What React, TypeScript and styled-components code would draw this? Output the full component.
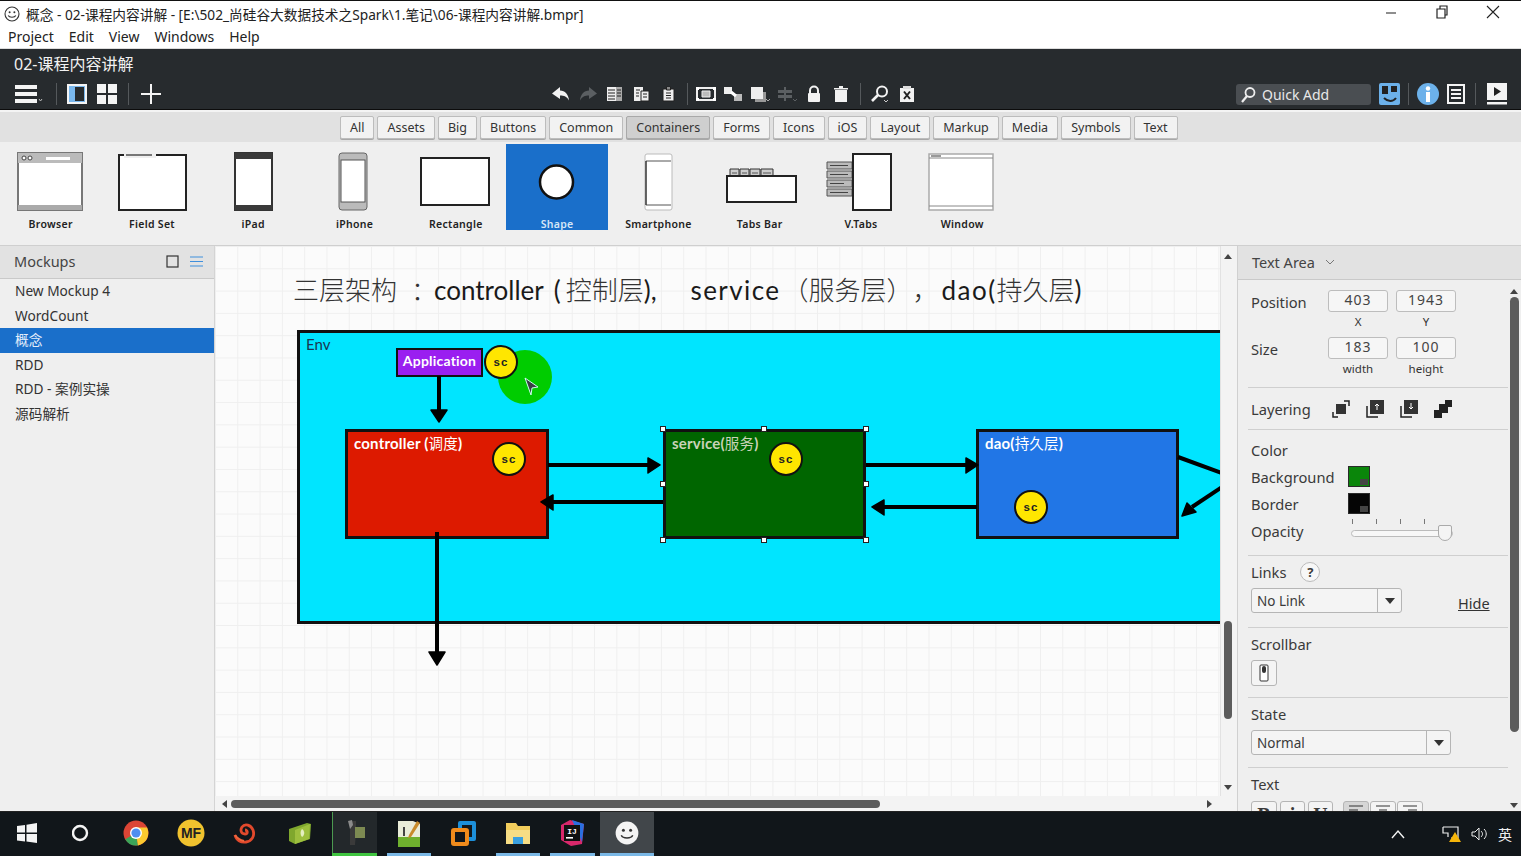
import styled, { createGlobalStyle } from 'styled-components';
import { ReactNode } from 'react';

const GlobalStyle = createGlobalStyle`
  html, body { margin: 0; padding: 0; background: #fff; }
  * { box-sizing: border-box; }
  body { font-family: "Noto Sans", "Noto Sans CJK SC", sans-serif; color: #333; }
`;

const Page = styled.div`
  width: 1521px;
  height: 856px;
  display: flex;
  flex-direction: column;
  overflow: hidden;
  background: #efefef;
`;

/* window chrome */
const TitleBar = styled.div`
  height: 26px;
  flex: none;
  display: flex;
  align-items: center;
  padding-left: 4px;
  gap: 6px;
  background: #fff;
  border-top: 1px solid #111;
  font-size: 13.7px;
  color: #222;
  white-space: nowrap;
`;

const WindowButtons = styled.div`
  margin-left: auto;
  display: flex;
  align-items: center;
  gap: 37px;
  padding-right: 21px;
  margin-top: -3px;
`;

const MenuBar = styled.div`
  height: 23px;
  flex: none;
  display: flex;
  align-items: center;
  gap: 15px;
  padding: 0 0 1px 8px;
  background: #fff;
  border-bottom: 1px solid #ddd;
  font-size: 14px;
  color: #222;
`;

const DarkBar = styled.div`
  height: 61px;
  flex: none;
  background: #272b2e;
  color: #fff;
  border-bottom: 1px solid #0c0c0c;
`;

const DocTitle = styled.div`
  height: 30px;
  padding: 5px 0 0 14px;
  font-size: 16px;
  line-height: 20px;
  color: #f2f2f2;
`;

const ToolRow = styled.div`
  height: 30px;
  display: flex;
  align-items: center;
  position: relative;
`;

const ToolGroup = styled.div<{ $start: number; $gap?: number }>`
  display: flex;
  align-items: center;
  gap: ${(p) => p.$gap ?? 7}px;
  margin-left: ${(p) => p.$start}px;
`;

const ToolSep = styled.span<{ $mx?: number }>`
  width: 1px;
  height: 22px;
  background: #55595c;
  margin: 0 ${(p) => p.$mx ?? 0}px;
`;

const ToolSpacer = styled.span`
  width: 10px;
`;

const QuickAdd = styled.div`
  width: 135px;
  height: 21px;
  border-radius: 3px;
  background: #4a4e52;
  display: flex;
  align-items: center;
  gap: 5px;
  padding-left: 4px;
  font-size: 14px;
  color: #e8e8e8;
`;

const FilterBar = styled.div`
  height: 32px;
  flex: none;
  display: flex;
  justify-content: flex-start;
  align-items: center;
  gap: 3px;
  padding-left: 340px;
  background: #e1e1e1;
  border-top: 2px solid #f4f4f4;
`;

const FilterButton = styled.div<{ $active?: boolean }>`
  height: 23px;
  padding: 0 9px;
  display: flex;
  align-items: center;
  font-size: 12.5px;
  color: #333;
  border-radius: 2px;
  border: 1px solid ${(p) => (p.$active ? '#a9a9a9' : '#bcbcbc')};
  background: ${(p) => (p.$active ? '#cfcfcf' : '#f2f2f2')};
  box-shadow: 0 1px 0 #a8a8a8;
`;

const Library = styled.div`
  height: 104px;
  flex: none;
  display: flex;
  background: #efefef;
  border-bottom: 1px solid #cfcfcf;
  padding-top: 2px;
`;

const LibraryItem = styled.div<{ $selected?: boolean }>`
  width: 101.3px;
  height: 86px;
  display: flex;
  flex-direction: column;
  align-items: center;
  background: ${(p) => (p.$selected ? '#1a6fca' : 'transparent')};
  font-size: 10.5px;
  font-weight: 600;
  letter-spacing: 0.3px;
  color: ${(p) => (p.$selected ? '#d5e6f7' : '#222')};
`;

const Thumb = styled.svg`
  width: 100px;
  height: 72px;
  margin-top: 1px;
  flex: none;
`;

/* main three columns */
const Main = styled.div`
  flex: 1;
  min-height: 0;
  display: flex;
`;

const Sidebar = styled.aside`
  width: 215px;
  flex: none;
  background: #efefef;
  border-right: 1px solid #d4d4d4;
`;

const PanelHeader = styled.div`
  height: 34px;
  display: flex;
  align-items: center;
  background: #e2e2e2;
  border-bottom: 1px solid #c9c9c9;
  font-size: 14.5px;
  color: #444;
`;

const SidebarHeader = styled(PanelHeader)`
  height: 33px;
  padding: 0 11px 2px 14px;
  gap: 11px;
  & > span { margin-right: auto; }
`;

const MockupList = styled.ul`
  list-style: none;
  margin: 0;
  padding: 0;
`;

const MockupRow = styled.li<{ $selected?: boolean }>`
  height: 24.6px;
  line-height: 24.6px;
  padding-left: 15px;
  font-size: 13.7px;
  color: ${(p) => (p.$selected ? '#e4eefa' : '#333')};
  background: ${(p) => (p.$selected ? '#1a6fca' : 'transparent')};
`;

const CanvasArea = styled.div`
  flex: 1;
  min-width: 0;
  display: grid;
  grid-template-columns: 1fr 17px;
  grid-template-rows: 1fr 15px;
`;

const Canvas = styled.div`
  position: relative;
  overflow: hidden;
  background-color: #fbfbfb;
  background-image: linear-gradient(#efefef 1px, transparent 1px), linear-gradient(90deg, #efefef 1px, transparent 1px);
  background-size: 22.3px 22.3px;
`;

const Heading = styled.div`
  position: absolute;
  left: 78px;
  top: 25px;
  font-family: "Lato", "Noto Sans CJK SC", sans-serif;
  font-size: 26px;
  line-height: 36px;
  color: #1a1a1a;
  white-space: pre;
`;

const HeadWord = styled.span<{ $ml?: number; $ls?: number }>`
  margin-left: ${(p) => p.$ml ?? 0}px;
  letter-spacing: ${(p) => p.$ls ?? 0}px;
`;

const HeadCjk = styled.span<{ $ml?: number }>`
  margin-left: ${(p) => p.$ml ?? 0}px;
  font-family: "Noto Sans CJK SC", sans-serif;
  font-weight: 300;
  font-size: 26px;
  color: #333;
  text-spacing-trim: space-all;
`;

const HalfColon = styled(HeadCjk)`
  font-feature-settings: "halt";
`;

const Env = styled.div`
  position: absolute;
  left: 82px;
  top: 84px;
  width: 1100px;
  height: 294px;
  background: #00e5ff;
  border: 3px solid #111;
  padding: 2px 6px;
  font-family: "Lato", sans-serif;
  font-size: 15px;
  color: #1a3550;
`;

const DiagramBox = styled.div<{ $x: number; $y: number; $w: number; $h: number; $bg: string; $muted?: boolean }>`
  position: absolute;
  left: ${(p) => p.$x - 215}px;
  top: ${(p) => p.$y - 246}px;
  width: ${(p) => p.$w}px;
  height: ${(p) => p.$h}px;
  background: ${(p) => p.$bg};
  border: 3px solid #111;
  padding: 0 6px;
  font-family: "Lato", "Noto Sans CJK SC", sans-serif;
  font-size: 15px;
  line-height: 21px;
  font-weight: 700;
  letter-spacing: 0.2px;
  color: ${(p) => (p.$muted ? '#c9d3b8' : '#fff')};
  white-space: nowrap;
`;

const BoxCjk = styled.span`
  font-family: "Noto Sans CJK SC", sans-serif;
  font-weight: 400;
  font-size: 14.5px;
`;

const AppBox = styled(DiagramBox)`
  text-align: center;
  border-width: 2px;
  padding: 0;
  font-size: 14px;
  line-height: 22px;
`;

const Spark = styled.div<{ $cx: number; $cy: number }>`
  position: absolute;
  left: ${(p) => p.$cx - 215 - 17}px;
  top: ${(p) => p.$cy - 246 - 17}px;
  width: 34px;
  height: 34px;
  border-radius: 50%;
  border: 2.5px solid #111;
  background: #ffe600;
  display: flex;
  align-items: center;
  justify-content: center;
  font-family: "Liberation Sans", sans-serif;
  font-size: 11.5px;
  font-weight: 700;
  letter-spacing: 1px;
  color: #222;
`;

const CursorHalo = styled.div`
  position: absolute;
  left: 283px;
  top: 104px;
  width: 54px;
  height: 54px;
  border-radius: 50%;
  background: #00cc00;
`;

const Overlay = styled.svg`
  position: absolute;
  left: 0;
  top: 0;
  width: 1005px;
  height: 550px;
`;

const Handle = styled.span<{ $cx: number; $cy: number }>`
  position: absolute;
  left: ${(p) => p.$cx - 215 - 3}px;
  top: ${(p) => p.$cy - 246 - 3}px;
  width: 6px;
  height: 6px;
  background: #fff;
  border: 1px solid #222;
`;

const VScroll = styled.div`
  background: #f3f3f3;
  border-left: 1px solid #e2e2e2;
  display: flex;
  flex-direction: column;
  align-items: center;
  padding: 8px 2px 6px 0;
  grid-row: 1;
  grid-column: 2;
`;

const VThumb = styled.div`
  width: 8px;
  height: 98px;
  margin-top: auto;
  margin-bottom: 66px;
  border-radius: 4px;
  background: #5c5c5c;
`;

const HScroll = styled.div`
  grid-column: 1 / 3;
  grid-row: 2;
  background: #f3f3f3;
  display: flex;
  align-items: center;
  padding: 0 25px 0 7px;
`;

const HThumb = styled.div`
  width: 649px;
  height: 8px;
  margin-left: 4px;
  border-radius: 4px;
  background: #5c5c5c;
`;

const ScrollArrow = styled.span<{ $dir: 'up' | 'down' | 'left' | 'right' }>`
  width: 0;
  height: 0;
  border: 4px solid transparent;
  ${(p) => (p.$dir === 'up' ? 'border-bottom: 5px solid #444; border-top-width: 0;' : '')}
  ${(p) => (p.$dir === 'down' ? 'border-top: 5px solid #444; border-bottom-width: 0;' : '')}
  ${(p) => (p.$dir === 'left' ? 'border-right: 5px solid #444; border-left-width: 0;' : '')}
  ${(p) => (p.$dir === 'right' ? 'border-left: 5px solid #444; border-right-width: 0; margin-left: auto;' : '')}
`;

/* properties panel */
const Inspector = styled.aside`
  width: 284px;
  flex: none;
  display: flex;
  flex-direction: column;
  position: relative;
  background: #efefef;
  border-left: 1px solid #d0d0d0;
`;

const InspectorHeader = styled(PanelHeader)`
  padding: 0 0 1px 14px;
  gap: 10px;
`;

const InspectorBody = styled.div`
  flex: 1;
  min-height: 0;
  overflow: hidden;
  padding: 0 13px 0 10px;
  font-size: 14.7px;
  color: #3a3a3a;
`;

const Section = styled.section<{ $h: number; $pad?: number }>`
  height: ${(p) => p.$h}px;
  padding: ${(p) => p.$pad ?? 7}px 0 0 3px;
  border-bottom: 1px solid #cfcfcf;
`;

const FieldRow = styled.div`
  display: grid;
  grid-template-columns: 69px 60px 60px;
  column-gap: 8px;
  height: 47px;
  align-items: start;
  line-height: 24px;
`;

const NumBox = styled.div`
  display: flex;
  flex-direction: column;
  align-items: center;
  font-size: 11.5px;
  color: #333;
  & > div {
    width: 60px;
    height: 22px;
    margin-bottom: 2px;
    border: 1px solid #bdbdbd;
    border-radius: 3px;
    background: #f6f6f6;
    text-align: center;
    font-size: 14px;
    line-height: 18px;
    letter-spacing: 1px;
    color: #444;
  }
  & > span { line-height: 16px; }
`;

const IconRow = styled.div`
  display: flex;
  align-items: center;
  height: 42px;
  gap: 16px;
  & > span { width: 64px; margin-right: 1px; }
`;

const ColorRow = styled.div`
  display: flex;
  align-items: center;
  height: 27px;
  & > span:first-child { width: 97px; }
`;

const Swatch = styled.div<{ $color: string }>`
  width: 22px;
  height: 21px;
  position: relative;
  background: ${(p) => p.$color};
  border: 1px solid #2a2a2a;
  &::after {
    content: '';
    position: absolute;
    right: 1px;
    bottom: 1px;
    width: 8px;
    height: 6px;
    background: #444;
  }
`;

const Slider = styled.div`
  width: 102px;
  height: 7px;
  margin: 6px 0 0 3px;
  position: relative;
  background: #f7f7f7;
  border: 1px solid #bbb;
  border-radius: 4px;
  &::before {
    content: '';
    position: absolute;
    left: 0;
    right: 6px;
    top: -12px;
    height: 5px;
    background-image: linear-gradient(90deg, #777 1px, transparent 1px);
    background-size: 24px 5px;
  }
`;

const SliderThumb = styled.span`
  position: absolute;
  right: 0;
  top: -6px;
  width: 14px;
  height: 16px;
  background: #f4f4f4;
  border: 1px solid #aaa;
  border-radius: 2px 2px 7px 7px;
`;

const LinksHead = styled.div`
  display: flex;
  align-items: center;
  gap: 14px;
  height: 20px;
  margin-bottom: 6px;
`;

const HelpDot = styled.span`
  width: 20px;
  height: 20px;
  border-radius: 50%;
  background: #f7f7f7;
  border: 1px solid #bbb;
  font-size: 13px;
  font-weight: 700;
  text-align: center;
  line-height: 18px;
`;

const SelectBox = styled.div<{ $w: number }>`
  width: ${(p) => p.$w}px;
  height: 25px;
  display: flex;
  border: 1px solid #b5b5b5;
  border-radius: 3px;
  background: #f4f4f4;
  font-size: 13.5px;
  line-height: 24px;
  padding-left: 5px;
  & > i {
    margin-left: auto;
    width: 24px;
    border-left: 1px solid #b5b5b5;
    display: flex;
    align-items: center;
    justify-content: center;
  }
`;

const Caret = styled.span`
  width: 0;
  height: 0;
  border-left: 5.5px solid transparent;
  border-right: 5.5px solid transparent;
  border-top: 6px solid #333;
`;

const LinksRow = styled.div`
  display: flex;
  align-items: flex-start;
`;

const HideLink = styled.a`
  margin: 5px 0 0 56px;
  font-size: 14.5px;
  line-height: 20px;
  text-decoration: underline;
  color: #333;
`;

const SectionLabel = styled.div`
  height: 20px;
  line-height: 20px;
  margin-bottom: 6px;
`;

const SmallButton = styled.div<{ $w?: number; $active?: boolean }>`
  width: ${(p) => p.$w ?? 26}px;
  height: 26px;
  display: flex;
  align-items: center;
  justify-content: center;
  border: 1px solid #b5b5b5;
  border-radius: 3px;
  background: ${(p) => (p.$active ? '#d6d6d6' : '#f4f4f4')};
`;

const TextButton = styled(SmallButton)`
  align-items: flex-start;
  padding-top: 3px;
  font-family: "Liberation Serif", serif;
  font-size: 20px;
  line-height: 20px;
  font-weight: 700;
`;

const TextTools = styled.div`
  display: flex;
  gap: 3px;
  padding-top: 1px;
`;

const AlignGroup = styled.div`
  display: flex;
  gap: 1px;
  margin-left: 7px;
`;

const InspectorScroll = styled.div`
  position: absolute;
  right: 2px;
  top: 43px;
  bottom: 3px;
  width: 10px;
  display: flex;
  flex-direction: column;
  align-items: center;
  gap: 3px;
  & > div {
    width: 9px;
    height: 435px;
    border-radius: 5px;
    background: #5c5c5c;
  }
  & > span:last-child { margin-top: auto; }
`;

/* taskbar */
const Taskbar = styled.footer`
  height: 45px;
  flex: none;
  display: flex;
  align-items: stretch;
  background: #11161a;
  border-top: 1px solid #222;
  color: #f0f0f0;
`;

const TaskCell = styled.div<{ $active?: boolean; $open?: string; $edge?: boolean }>`
  position: relative;
  width: 54.5px;
  display: flex;
  align-items: center;
  justify-content: center;
  padding-bottom: 2px;
  background: ${(p) => (p.$active ? '#41464a' : p.$edge ? '#23282b' : 'transparent')};
  background-clip: content-box;
  ${(p) => (p.$edge ? 'border-left: 5px solid #11161a; border-right: 5px solid #11161a; box-shadow: inset 1px 0 0 #4c9a50;' : '')}
  &::after {
    content: '';
    display: ${(p) => (p.$open ? 'block' : 'none')};
    position: absolute;
    bottom: 0;
    height: 3px;
    left: ${(p) => (p.$active || p.$edge ? 0 : 5)}px;
    right: ${(p) => (p.$active || p.$edge ? 0 : 5)}px;
    background: ${(p) => p.$open};
  }
`;

const Tray = styled.div`
  margin-left: auto;
  display: flex;
  align-items: center;
  gap: 9px;
  padding-right: 9px;
  font-size: 14px;
  font-family: "Noto Sans CJK SC", sans-serif;
`;

const TrayGap = styled.span`
  width: 18px;
`;

const I = ({ w = 20, h = 20, vb, children }: { w?: number; h?: number; vb?: string; children: ReactNode }) => (
  <svg width={w} height={h} viewBox={vb ?? `0 0 ${w} ${h}`} style={{ flex: 'none' }}>
    {children}
  </svg>
);

const Smile = ({ size = 16, stroke = '#333', fill = 'none' }: { size?: number; stroke?: string; fill?: string }) => (
  <I w={size} h={size} vb="0 0 16 16">
    <circle cx="8" cy="8" r="7" fill={fill} stroke={stroke} strokeWidth="1.1" />
    <circle cx="5.6" cy="6.2" r="1" fill={stroke} />
    <circle cx="10.4" cy="6.2" r="1" fill={stroke} />
    <path d="M4.2 9.5c1 2.4 6.6 2.4 7.6 0" fill="none" stroke={stroke} strokeWidth="1.1" />
  </I>
);

const DocIcon = ({ mark }: { mark: 'lines' | 'paste' | 'clip' }) => (
  <I>
    {mark !== 'clip' && <rect x="2" y="3" width="9" height="14" fill="#eee" />}
    {mark === 'lines' && <rect x="11" y="3" width="6" height="14" fill="#aaa" />}
    {mark === 'lines' && <path d="M3 6h7M3 9h7M3 12h7M3 15h7M12 6h4M12 9h4M12 12h4" stroke="#222" />}
    {mark === 'paste' && <path d="M9 7h8v10H9z" fill="#eee" stroke="#222" />}
    {mark === 'paste' && <path d="M4 6h4M4 9h3M4 12h3M11 10h4M11 13h4" stroke="#222" />}
    {mark === 'clip' && <path d="M4 5h11v12H4zM7.5 3h4v3h-4z" fill="#eee" stroke="#222" />}
    {mark === 'clip' && <path d="M7 9h5M7 11.5h5M7 14h5" stroke="#222" />}
  </I>
);

const ToolIcons = () => (
  <ToolGroup $start={389}>
    <I>
      <path d="M9 3 1 9.5 9 15v-3.5c4 0 7 1.2 9 5-.4-6-4-10-9-10z" fill="#f2f2f2" />
    </I>
    <I>
      <path d="M11 3l8 6.5-8 5.5v-3.5c-4 0-7 1.2-9 5 .4-6 4-10 9-10z" fill="#5b5f62" />
    </I>
    <DocIcon mark="lines" />
    <DocIcon mark="paste" />
    <DocIcon mark="clip" />
    <ToolSep $mx={1} />
    <I>
      <path d="M1 4h18v12H1z" fill="none" stroke="#eee" strokeWidth="2" />
      <path d="M6 7h8v6H6z" fill="#bbb" stroke="#eee" />
      <path d="M0 3h3v3H0zM17 3h3v3h-3zM0 14h3v3H0zM17 14h3v3h-3z" fill="#fff" />
    </I>
    <I>
      <path d="M1 3h8v7H1z" fill="#eee" />
      <path d="M11 10h8v7h-8z" fill="#bbb" />
      <path d="M8 8l5 4" stroke="#fff" strokeWidth="3" />
    </I>
    <I>
      <path d="M1 3h12v12H1z" fill="#eee" />
      <path d="M13 8h3v10H5v-3h8z" fill="#999" />
      <path d="M16 15l2 2 2-2" fill="none" stroke="#aaa" />
    </I>
    <I>
      <path d="M1 6h14v3H1zM1 11h14v3H1zM7 3h2v14H7z" fill="#5b5f62" />
      <path d="M16 15l2 2 2-2" fill="none" stroke="#5b5f62" />
    </I>
    <I>
      <path d="M6 9V6.5a4 4 0 0 1 8 0V9" fill="none" stroke="#f2f2f2" strokeWidth="2" />
      <rect x="4" y="9" width="12" height="9" rx="1" fill="#f2f2f2" />
    </I>
    <I>
      <path d="M4 6h12v12H4z" fill="#f2f2f2" />
      <path d="M3 4h14v1.5H3zM8 2h4v2H8z" fill="#f2f2f2" />
    </I>
    <ToolSep $mx={2} />
    <I>
      <circle cx="12" cy="7.5" r="5" fill="none" stroke="#f2f2f2" strokeWidth="2" />
      <path d="M8 11l-6 6" stroke="#f2f2f2" strokeWidth="2.6" />
      <path d="M14 16l2 2 2-2" fill="none" stroke="#ccc" />
    </I>
    <I>
      <path d="M3 4h14v14H3z" fill="#f2f2f2" />
      <path d="M6 2h8v3H6z" fill="#ddd" />
      <path d="M7 7.5l6 7.5M13 7.5l-6 7.5" stroke="#222" strokeWidth="2" />
    </I>
  </ToolGroup>
);

const Boxy = ({ x, y, w, h }: { x: number; y: number; w: number; h: number }) => (
  <rect x={x} y={y} width={w} height={h} fill="#fff" stroke="#222" strokeWidth="2" />
);

const thumbs: Record<string, ReactNode> = {
  Browser: (
    <>
      <rect x="17" y="8" width="64" height="57" fill="#fff" stroke="#777" strokeWidth="2" />
      <rect x="17" y="8" width="64" height="10" fill="#bbb" />
      <rect x="45" y="12" width="24" height="3" fill="#fff" />
      <circle cx="23" cy="13" r="2" fill="#fff" stroke="#444" />
      <circle cx="29" cy="13" r="2" fill="#fff" stroke="#444" />
      <rect x="17" y="60" width="64" height="5" fill="#aaa" />
    </>
  ),
  'Field Set': (
    <>
      <Boxy x={17} y={10} w={67} h={55} />
      <rect x="22" y="7" width="32" height="6" fill="#efefef" />
      <rect x="24" y="9" width="26" height="2" fill="#777" />
    </>
  ),
  iPad: (
    <>
      <rect x="32" y="8" width="37" height="57" fill="#fff" stroke="#333" strokeWidth="2" />
      <rect x="32" y="8" width="37" height="6" fill="#3a3a3a" />
      <rect x="32" y="60" width="37" height="5" fill="#3a3a3a" />
    </>
  ),
  iPhone: (
    <>
      <rect x="34" y="8" width="28" height="57" rx="3" fill="#bbb" stroke="#666" />
      <rect x="36" y="15" width="24" height="42" fill="#fff" stroke="#555" />
    </>
  ),
  Rectangle: <Boxy x={15} y={13} w={68} h={47} />,
  Shape: <circle cx="49.5" cy="37" r="16.5" fill="#fff" stroke="#111" strokeWidth="2.5" />,
  Smartphone: (
    <>
      <rect x="37" y="9" width="27" height="56" rx="2" fill="#fff" stroke="#bbb" />
      <path d="M38 16h25M38 60h25" stroke="#555" />
      <path d="M38 16v44" stroke="#333" strokeWidth="1.5" />
    </>
  ),
  'Tabs Bar': (
    <>
      <path d="M20 24h9v8h-9zM30 24h9v8h-9zM40 24h10v8H40zM51 24h12v8H51z" fill="#ccc" stroke="#333" />
      <path d="M22 28h5M32 28h5M42 28h6M53 28h8" stroke="#555" />
      <Boxy x={17} y={31} w={69} h={26} />
    </>
  ),
  'V.Tabs': (
    <>
      <path d="M16 17h25v7H16zM16 26h25v7H16zM16 35h25v7H16zM16 44h25v7H16z" fill="#bbb" stroke="#555" />
      <path d="M19 20.5h18M19 29.5h18M19 38.5h14M19 47.5h18" stroke="#444" />
      <Boxy x={42} y={9} w={38} h={56} />
    </>
  ),
  Window: (
    <>
      <rect x="17" y="9" width="64" height="56" fill="#fff" stroke="#aaa" strokeWidth="1.5" />
      <path d="M17 13h64M17 61h64" stroke="#888" />
      <rect x="19" y="10" width="10" height="2" fill="#999" />
    </>
  ),
};

const Arrow = ({ d, head }: { d: string; head: string }) => (
  <>
    <path d={d} stroke="#000" strokeWidth="4" fill="none" />
    <path d={head} fill="#000" stroke="#000" strokeWidth="1.5" strokeLinejoin="round" />
  </>
);

const filters = ['All', 'Assets', 'Big', 'Buttons', 'Common', 'Containers', 'Forms', 'Icons', 'iOS', 'Layout', 'Markup', 'Media', 'Symbols', 'Text'];
const mockups = ['New Mockup 4', 'WordCount', '概念', 'RDD', 'RDD - 案例实操', '源码解析'];
const handles = [
  [663, 429], [764, 429], [866, 429],
  [663, 484], [866, 484],
  [663, 540], [764, 540], [866, 540],
];
const sparks = [
  [501, 362], [509, 459], [786, 459], [1031, 507],
];

export default function App() {
  return (
    <Page>
      <GlobalStyle />
      <TitleBar>
        <Smile />
        <span>概念 - 02-课程内容讲解 - [E:\502_尚硅谷大数据技术之Spark\1.笔记\06-课程内容讲解.bmpr]</span>
        <WindowButtons>
          <I w={14} h={14}><path d="M2 8h10" stroke="#444" strokeWidth="1.2" /></I>
          <I w={14} h={14}><path d="M2 4h8v9H2zM5 4V1h7v9h-2" fill="none" stroke="#222" strokeWidth="1.2" /></I>
          <I w={14} h={14}><path d="M1 1l12 12M13 1L1 13" stroke="#222" strokeWidth="1.1" /></I>
        </WindowButtons>
      </TitleBar>
      <MenuBar>
        <span>Project</span>
        <span>Edit</span>
        <span>View</span>
        <span>Windows</span>
        <span>Help</span>
      </MenuBar>

      <DarkBar>
        <DocTitle>02-课程内容讲解</DocTitle>
        <ToolRow>
          <ToolGroup $start={15} $gap={0}>
            <I w={31} h={22}>
              <path d="M0 2h22v4H0zM0 9h22v4H0zM0 16h22v4H0z" fill="#f4f4f4" />
              <path d="M24 16l1.5 2 1.5-2" fill="none" stroke="#bbb" />
            </I>
            <ToolSep $mx={10} />
            <I w={20} h={20}>
              <rect x="1" y="1" width="18" height="18" fill="#7ab8ee" stroke="#f4f4f4" strokeWidth="2" />
              <rect x="8" y="3" width="9" height="14" fill="#272b2e" />
            </I>
            <ToolSpacer />
            <I w={20} h={20}>
              <path d="M0 0h9v9H0zM11 0h9v9h-9zM0 11h9v9H0zM11 11h9v9h-9z" fill="#f4f4f4" />
            </I>
            <ToolSep $mx={11} />
            <I w={22} h={22}>
              <path d="M11 1v20M1 11h20" stroke="#f4f4f4" strokeWidth="2" />
            </I>
          </ToolGroup>
          <ToolIcons />
          <ToolGroup $start={319} $gap={8}>
            <QuickAdd>
              <I w={17} h={17}>
                <circle cx="10" cy="6.5" r="4.5" fill="none" stroke="#eee" strokeWidth="1.8" />
                <path d="M7 10l-5 6" stroke="#eee" strokeWidth="2.2" />
              </I>
              Quick Add
            </QuickAdd>
            <I w={21} h={22}>
              <rect width="21" height="22" rx="2" fill="#6cb1ea" />
              <path d="M3 3h6v8H3zM12 3h6v6h-6z" fill="#222" />
              <path d="M5 15c4 4 9 4 12 0" fill="none" stroke="#222" strokeWidth="2" />
            </I>
            <ToolSep />
            <I w={22} h={24}>
              <circle cx="11" cy="12" r="11" fill="#6cb1ea" />
              <rect x="9" y="10" width="4" height="10" fill="#fff" />
              <circle cx="11" cy="6.5" r="2.2" fill="#fff" />
            </I>
            <I w={18} h={20}>
              <rect x="1" y="1" width="16" height="18" fill="#272b2e" stroke="#f4f4f4" strokeWidth="2" />
              <path d="M4 6h10M4 10h10M4 14h10" stroke="#f4f4f4" strokeWidth="2" />
            </I>
            <ToolSep $mx={2} />
            <I w={22} h={22}>
              <rect x="1" y="0" width="20" height="17" fill="#f4f4f4" />
              <path d="M8 4l7 4.5-7 4.5z" fill="#222" />
              <rect x="1" y="19" width="20" height="2.5" fill="#f4f4f4" />
            </I>
          </ToolGroup>
        </ToolRow>
      </DarkBar>

      <FilterBar>
        {filters.map((f) => (
          <FilterButton key={f} $active={f === 'Containers'}>{f}</FilterButton>
        ))}
      </FilterBar>

      <Library>
        {Object.keys(thumbs).map((name) => (
          <LibraryItem key={name} $selected={name === 'Shape'}>
            <Thumb viewBox="0 0 100 72">{thumbs[name]}</Thumb>
            {name}
          </LibraryItem>
        ))}
      </Library>

      <Main>
        <Sidebar>
          <SidebarHeader>
            <span>Mockups</span>
            <I w={13} h={13}><rect x="1" y="1" width="11" height="11" fill="none" stroke="#333" strokeWidth="1.2" /></I>
            <I w={13} h={13}><path d="M0 2h13M0 6.5h13M0 11h13" stroke="#3f8fdc" strokeWidth="1.2" /></I>
          </SidebarHeader>
          <MockupList>
            {mockups.map((m) => (
              <MockupRow key={m} $selected={m === '概念'}>{m}</MockupRow>
            ))}
          </MockupList>
        </Sidebar>

        <CanvasArea>
          <Canvas>
            <Heading>
              <HeadCjk>三层架构</HeadCjk>
              <HalfColon $ml={14}>：</HalfColon>
              <HeadWord $ml={10}>controller</HeadWord>
              <HeadWord $ml={10}>(</HeadWord>
              <HeadCjk $ml={5}>控制层</HeadCjk>
              <HeadWord>),</HeadWord>
              <HeadWord $ml={34} $ls={1.4}>service</HeadWord>
              <HeadCjk $ml={2}>（服务层），</HeadCjk>
              <HeadWord $ml={3} $ls={1.5}>dao(</HeadWord>
              <HeadCjk>持久层</HeadCjk>
              <HeadWord>)</HeadWord>
            </Heading>
            <Env>Env</Env>
            <CursorHalo />
            <AppBox $x={396} $y={348} $w={87} $h={29} $bg="#9a1ff0">Application</AppBox>
            <DiagramBox $x={345} $y={429} $w={204} $h={110} $bg="#dd1a00">controller (<BoxCjk>调度</BoxCjk>)</DiagramBox>
            <DiagramBox $x={663} $y={429} $w={203} $h={110} $bg="#006600" $muted>service(<BoxCjk>服务</BoxCjk>)</DiagramBox>
            <DiagramBox $x={976} $y={429} $w={203} $h={110} $bg="#2176e6">dao(<BoxCjk>持久层</BoxCjk>)</DiagramBox>
            <Overlay viewBox="215 246 1005 550">
              <Arrow d="M439 376V412" head="M431 410h16l-8 12z" />
              <Arrow d="M437 532V655" head="M429 652h16l-8 13z" />
              <Arrow d="M548 465H650" head="M648 458l12 7-12 8z" />
              <Arrow d="M663 502H552" head="M553 495l-12 7 12 8z" />
              <Arrow d="M866 465H968" head="M966 458l12 7-12 8z" />
              <Arrow d="M977 507H882" head="M884 500l-12 7 12 8z" />
              <Arrow d="M1178 457L1222 473" head="" />
              <Arrow d="M1222 487L1192 507" head="M1187 503l9 9-14 4z" />
              <path d="M525 378l13 9-6 1-1 7z" fill="#3a3f45" stroke="#cfe" strokeWidth="1" />
            </Overlay>
            {sparks.map(([cx, cy]) => (
              <Spark key={cx} $cx={cx} $cy={cy}>sc</Spark>
            ))}
            {handles.map(([cx, cy]) => (
              <Handle key={`${cx}-${cy}`} $cx={cx} $cy={cy} />
            ))}
          </Canvas>
          <VScroll>
            <ScrollArrow $dir="up" />
            <VThumb />
            <ScrollArrow $dir="down" />
          </VScroll>
          <HScroll>
            <ScrollArrow $dir="left" />
            <HThumb />
            <ScrollArrow $dir="right" />
          </HScroll>
        </CanvasArea>

        <Inspector>
          <InspectorHeader>
            Text Area
            <I w={10} h={10}><path d="M1 3l4 4 4-4" fill="none" stroke="#777" /></I>
          </InspectorHeader>
          <InspectorBody>
            <Section $h={108} $pad={10}>
              <FieldRow>
                <span>Position</span>
                <NumBox><div>403</div><span>X</span></NumBox>
                <NumBox><div>1943</div><span>Y</span></NumBox>
              </FieldRow>
              <FieldRow>
                <span>Size</span>
                <NumBox><div>183</div><span>width</span></NumBox>
                <NumBox><div>100</div><span>height</span></NumBox>
              </FieldRow>
            </Section>
            <Section $h={42} $pad={0}>
              <IconRow>
                <span>Layering</span>
                <I w={18} h={18}>
                  <path d="M4 4h10v10H4z" fill="#333" />
                  <path d="M12 1h5v5M1 12v5h5" fill="none" stroke="#222" strokeWidth="1.5" />
                </I>
                <I w={18} h={18}>
                  <path d="M4 0h14v14H4z" fill="#333" />
                  <path d="M11 10V4M9 6l2-2 2 2" fill="none" stroke="#fff" />
                  <path d="M1 6v11h11" fill="none" stroke="#222" strokeWidth="1.5" />
                </I>
                <I w={18} h={18}>
                  <path d="M4 0h14v14H4z" fill="#333" />
                  <path d="M11 3v6M9 7l2 2 2-2" fill="none" stroke="#fff" />
                  <path d="M1 6v11h11" fill="none" stroke="#222" strokeWidth="1.5" />
                </I>
                <I w={18} h={18}>
                  <path d="M11 0h7v7h-7zM5 4h9v9H5zM0 10h8v8H0z" fill="#222" />
                </I>
              </IconRow>
            </Section>
            <Section $h={126} $pad={6}>
              <ColorRow>Color</ColorRow>
              <ColorRow><span>Background</span><Swatch $color="#0a860a" /></ColorRow>
              <ColorRow><span>Border</span><Swatch $color="#050505" /></ColorRow>
              <ColorRow>
                <span>Opacity</span>
                <Slider><SliderThumb /></Slider>
              </ColorRow>
            </Section>
            <Section $h={72} $pad={6}>
              <LinksHead>Links<HelpDot>?</HelpDot></LinksHead>
              <LinksRow>
                <SelectBox $w={151}>No Link<i><Caret /></i></SelectBox>
                <HideLink>Hide</HideLink>
              </LinksRow>
            </Section>
            <Section $h={70} $pad={6}>
              <SectionLabel>Scrollbar</SectionLabel>
              <SmallButton>
                <I w={10} h={18}>
                  <rect x="1" y="1" width="8" height="16" rx="1" fill="#fff" stroke="#333" />
                  <rect x="3" y="2" width="4" height="7" rx="2" fill="#333" />
                </I>
              </SmallButton>
            </Section>
            <Section $h={70} $pad={6}>
              <SectionLabel>State</SectionLabel>
              <SelectBox $w={200}>Normal<i><Caret /></i></SelectBox>
            </Section>
            <Section $h={60} $pad={6}>
              <SectionLabel>Text</SectionLabel>
              <TextTools>
                <TextButton>B</TextButton>
                <TextButton $w={25}>i</TextButton>
                <TextButton $w={25}>U</TextButton>
                <AlignGroup>
                  <TextButton $active><I w={14} h={10}><path d="M0 1h14M0 5h9" stroke="#333" /></I></TextButton>
                  <TextButton><I w={14} h={10}><path d="M0 1h14M3 5h8" stroke="#333" /></I></TextButton>
                  <TextButton><I w={14} h={10}><path d="M0 1h14M5 5h9" stroke="#333" /></I></TextButton>
                </AlignGroup>
              </TextTools>
            </Section>
          </InspectorBody>
          <InspectorScroll>
            <ScrollArrow $dir="up" />
            <div />
            <ScrollArrow $dir="down" />
          </InspectorScroll>
        </Inspector>
      </Main>

      <Taskbar>
        <TaskCell>
          <I w={20} h={20}><path d="M0 3l8-1v7.5H0zM9.5 1.8L20 0v9.5H9.5zM0 11h8v7.5l-8-1zM9.5 11H20v9L9.5 18.6z" fill="#f4f4f4" /></I>
        </TaskCell>
        <TaskCell>
          <I w={20} h={20}><circle cx="8" cy="10" r="7" fill="none" stroke="#f4f4f4" strokeWidth="2.4" /></I>
        </TaskCell>
        <TaskCell>
          <I w={26} h={26}>
            <circle cx="13" cy="13" r="12.5" fill="#dc4535" />
            <path d="M13 13L2.2 19.3A12.5 12.5 0 0 0 15 25.4z" fill="#3ba559" />
            <path d="M13 7.5h11a12.5 12.5 0 0 1-9 17.9L13 13z" fill="#fbc92f" />
            <circle cx="13" cy="13" r="6" fill="#fff" />
            <circle cx="13" cy="13" r="4.6" fill="#4f8ef0" />
          </I>
        </TaskCell>
        <TaskCell>
          <I w={28} h={28}>
            <circle cx="14" cy="14" r="13.5" fill="#f0c22e" />
            <text x="14" y="19" textAnchor="middle" fontSize="14" fontWeight="700" fontFamily="Liberation Sans" fill="#222">MF</text>
          </I>
        </TaskCell>
        <TaskCell>
          <I w={24} h={24}>
            <path d="M2 14c1 5 6 8 11 7 6-1 9-6 7-12-2-5-8-7-11-3-2 3-1 7 3 7 3 0 3-4 0-4" fill="none" stroke="#e2492c" strokeWidth="2.8" />
            <path d="M2 14c2 3 5 5 9 6" fill="none" stroke="#f0673e" strokeWidth="2" />
          </I>
        </TaskCell>
        <TaskCell>
          <I w={24} h={24}>
            <path d="M1 8l18-6 4 1-1 15-15 5-6-3z" fill="#7fa72d" />
            <path d="M7 9l15-6-1 15-14 5z" fill="#9dbf3e" />
            <path d="M14 8c3 2 3 6 0 8-2-2-2-6 0-8z" fill="#e4efc0" />
          </I>
        </TaskCell>
        <TaskCell $edge $open="#3fc43f">
          <I w={24} h={28}>
            <path d="M8 2h6v10l-1 14H8z" fill="#3a3a3a" />
            <path d="M6 2l4-1 1 5-3 4z" fill="#8b8b8b" />
            <rect x="13" y="8" width="10" height="11" fill="#7d8a52" />
          </I>
        </TaskCell>
        <TaskCell $open="#7ab8e6">
          <I w={24} h={28}>
            <path d="M1 2h15l7 3v23H1z" fill="#e9ecd9" />
            <rect x="1" y="18" width="22" height="10" fill="#6fb02e" />
            <path d="M6 8h2v9H6z" fill="#444" />
            <path d="M20 2l3 2-9 14-3 1 1-3z" fill="#c88b2b" />
          </I>
        </TaskCell>
        <TaskCell>
          <I w={28} h={28}>
            <path d="M11 11V4h14v16h-7" fill="none" stroke="#1d8fd9" strokeWidth="4" strokeLinejoin="round" />
            <rect x="4" y="11" width="14" height="14" rx="1" fill="none" stroke="#f08b1c" strokeWidth="4" />
          </I>
        </TaskCell>
        <TaskCell $open="#7ab8e6">
          <I w={26} h={24}>
            <path d="M1 2h10l2 3h12v18H1z" fill="#f2cd5c" />
            <path d="M1 9h24v14H1z" fill="#f7dd85" />
            <path d="M8 16h10v7H8z" fill="#3aa0e0" />
          </I>
        </TaskCell>
        <TaskCell $open="#7ab8e6">
          <I w={28} h={28}>
            <path d="M3 6l9-5 14 4-2 20-11 2-10-6z" fill="#d9286c" />
            <path d="M14 1l12 4-2 18z" fill="#2a6fe0" />
            <rect x="6" y="6" width="16" height="16" fill="#111" />
            <text x="14" y="15" textAnchor="middle" fontSize="8" fontWeight="700" fontFamily="Liberation Mono" fill="#fff">IJ</text>
            <rect x="8" y="18" width="7" height="1.6" fill="#fff" />
          </I>
        </TaskCell>
        <TaskCell $active $open="#7ab8e6">
          <I w={24} h={24} vb="0 0 16 16">
            <circle cx="8" cy="8" r="7.6" fill="#f4f4f4" />
            <circle cx="5.6" cy="6.2" r="1" fill="#333" />
            <circle cx="10.4" cy="6.2" r="1" fill="#333" />
            <path d="M4.2 9.5c1 2.4 6.6 2.4 7.6 0" fill="none" stroke="#333" strokeWidth="1" />
          </I>
        </TaskCell>
        <Tray>
          <I w={16} h={10} vb="0 0 16 10">
            <path d="M2 9l6-7 6 7" fill="none" stroke="#f4f4f4" strokeWidth="1.4" />
          </I>
          <TrayGap />
          <I w={20} h={18}>
            <path d="M1 2h15v11H9M1 2v6h5v4" fill="none" stroke="#eee" strokeWidth="1.2" />
            <path d="M13 7l6 10H7z" fill="#f5b50a" />
          </I>
          <I w={18} h={16}>
            <path d="M1 6h3l4-4v12l-4-4H1z" fill="none" stroke="#eee" />
            <path d="M10 5c2 2 2 4 0 6M13 3c3 3 3 7 0 10" fill="none" stroke="#eee" />
          </I>
          <span>英</span>
        </Tray>
      </Taskbar>
    </Page>
  );
}
